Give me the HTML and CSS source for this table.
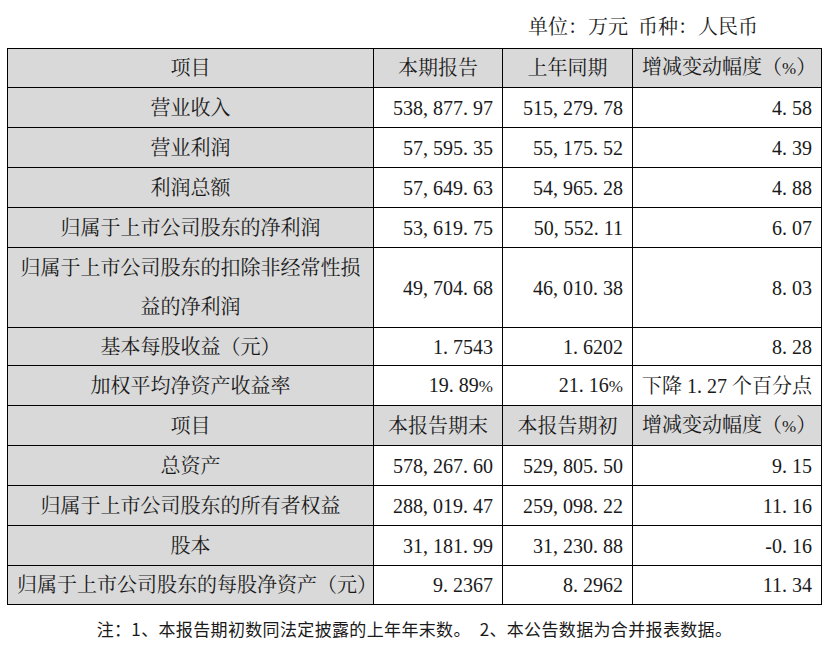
FILE: index.html
```html
<!DOCTYPE html>
<html lang="zh-CN">
<head>
<meta charset="utf-8">
<title>主要财务数据</title>
<link rel="stylesheet" href="styles.css">
</head>
<body>
<div class="page">
  <div class="unit">单位：万元&nbsp;&nbsp;币种：人民币</div>
  <table class="fin">
    <colgroup>
      <col class="c1"><col class="c2"><col class="c3"><col class="c4">
    </colgroup>
    <tr class="head h39">
      <td class="lab">项目</td><td class="hc">本期报告</td><td class="hc">上年同期</td><td class="hc">增减变动幅度（<span class="pc">%</span>）</td>
    </tr>
    <tr>
      <td class="lab">营业收入</td><td class="num">538<span class="pt">,</span>877<span class="pt">.</span>97</td><td class="num">515<span class="pt">,</span>279<span class="pt">.</span>78</td><td class="num">4<span class="pt">.</span>58</td>
    </tr>
    <tr>
      <td class="lab">营业利润</td><td class="num">57<span class="pt">,</span>595<span class="pt">.</span>35</td><td class="num">55<span class="pt">,</span>175<span class="pt">.</span>52</td><td class="num">4<span class="pt">.</span>39</td>
    </tr>
    <tr>
      <td class="lab">利润总额</td><td class="num">57<span class="pt">,</span>649<span class="pt">.</span>63</td><td class="num">54<span class="pt">,</span>965<span class="pt">.</span>28</td><td class="num">4<span class="pt">.</span>88</td>
    </tr>
    <tr>
      <td class="lab">归属于上市公司股东的净利润</td><td class="num">53<span class="pt">,</span>619<span class="pt">.</span>75</td><td class="num">50<span class="pt">,</span>552<span class="pt">.</span>11</td><td class="num">6<span class="pt">.</span>07</td>
    </tr>
    <tr class="h80">
      <td class="lab two">归属于上市公司股东的扣除非经常性损<br>益的净利润</td><td class="num">49<span class="pt">,</span>704<span class="pt">.</span>68</td><td class="num">46<span class="pt">,</span>010<span class="pt">.</span>38</td><td class="num">8<span class="pt">.</span>03</td>
    </tr>
    <tr class="h38">
      <td class="lab">基本每股收益（元）</td><td class="num">1<span class="pt">.</span>7543</td><td class="num">1<span class="pt">.</span>6202</td><td class="num">8<span class="pt">.</span>28</td>
    </tr>
    <tr>
      <td class="lab">加权平均净资产收益率</td><td class="num">19<span class="pt">.</span>89<span class="pc">%</span></td><td class="num">21<span class="pt">.</span>16<span class="pc">%</span></td><td class="num">下降 1<span class="pt">.</span>27 个百分点</td>
    </tr>
    <tr class="head">
      <td class="lab">项目</td><td class="hc">本报告期末</td><td class="hc">本报告期初</td><td class="hc">增减变动幅度（<span class="pc">%</span>）</td>
    </tr>
    <tr>
      <td class="lab">总资产</td><td class="num">578<span class="pt">,</span>267<span class="pt">.</span>60</td><td class="num">529<span class="pt">,</span>805<span class="pt">.</span>50</td><td class="num">9<span class="pt">.</span>15</td>
    </tr>
    <tr>
      <td class="lab">归属于上市公司股东的所有者权益</td><td class="num">288<span class="pt">,</span>019<span class="pt">.</span>47</td><td class="num">259<span class="pt">,</span>098<span class="pt">.</span>22</td><td class="num">11<span class="pt">.</span>16</td>
    </tr>
    <tr>
      <td class="lab">股本</td><td class="num">31<span class="pt">,</span>181<span class="pt">.</span>99</td><td class="num">31<span class="pt">,</span>230<span class="pt">.</span>88</td><td class="num">-0<span class="pt">.</span>16</td>
    </tr>
    <tr class="h39">
      <td class="lab">归属于上市公司股东的每股净资产（元）</td><td class="num">9<span class="pt">.</span>2367</td><td class="num">8<span class="pt">.</span>2962</td><td class="num">11<span class="pt">.</span>34</td>
    </tr>
  </table>
  <p class="note">注：1、本报告期初数同法定披露的上年年末数。　2、本公告数据为合并报表数据。</p>
</div>
</body>
</html>
```
FILE: styles.css
```css
html, body {
  margin: 0;
  padding: 0;
  background: #ffffff;
}

.page {
  width: 829px;
  font-family: "Liberation Serif", "Noto Serif CJK SC", "Noto Sans CJK SC", serif;
  color: #1a1a1a;
}

.unit {
  font-size: 20px;
  line-height: 28px;
  text-align: right;
  padding: 13px 71px 0 0;
  height: 35px;
  box-sizing: border-box;
}

.fin {
  margin-left: 7px;
  margin-top: 13px;
  width: 814px;
  border-collapse: collapse;
  table-layout: fixed;
  font-size: 20px;
}

.c1 { width: 366px; }
.c2 { width: 129px; }
.c3 { width: 130px; }
.c4 { width: 189px; }

.fin td {
  border: 1px solid #000;
  height: 40px;
  padding: 0 9px;
  line-height: 24px;
  white-space: nowrap;
  box-sizing: border-box;
}

.fin tr.h39 td { height: 39px; }
.fin tr.h38 td { height: 38px; }
.fin tr.h80 td { height: 80px; }

.lab {
  background: #d9d9d9;
  text-align: center;
  padding: 0 4px;
}

.lab.two {
  line-height: 39px;
  padding-left: 0;
  padding-right: 0;
}

.head td {
  background: #d9d9d9;
}

.hc {
  text-align: center;
}

.num {
  text-align: right;
}

.pt {
  padding-right: 5px;
}

.pc {
  font-size: 17px;
}

.note {
  margin: 12px 0 0;
  font-family: "Noto Sans CJK SC", sans-serif;
  font-size: 17px;
  line-height: 24px;
  letter-spacing: 0.35px;
  text-align: center;
  color: #1a1a1a;
}
```
